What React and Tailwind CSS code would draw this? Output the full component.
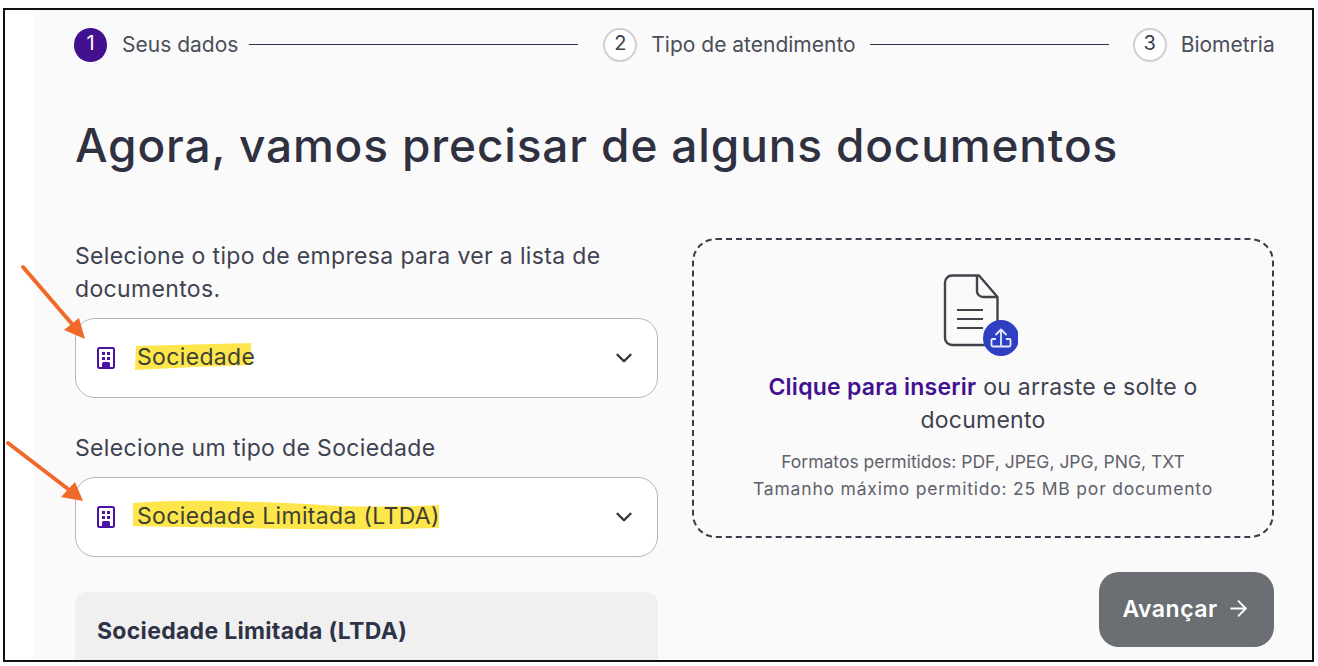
import { ChevronDown, ArrowRight } from 'lucide-react';

const font = { fontFamily: 'Inter' };

const BuildingIcon = () => (
  <svg width="18" height="22" viewBox="0 0 18 22" fill="none" className="shrink-0">
    <rect x="1" y="1" width="16" height="20" rx="1.5" stroke="#4a14a0" strokeWidth="2" />
    <rect x="5" y="5" width="3" height="3" fill="#4a14a0" />
    <rect x="10" y="5" width="3" height="3" fill="#4a14a0" />
    <rect x="5" y="10" width="3" height="3" fill="#4a14a0" />
    <rect x="10" y="10" width="3" height="3" fill="#4a14a0" />
    <path d="M5 21v-4.5a1.5 1.5 0 0 1 1.5-1.5h5a1.5 1.5 0 0 1 1.5 1.5V21z" fill="#4a14a0" />
  </svg>
);

const Step = ({ n, label, active }) => (
  <div className="flex items-center gap-[14px] shrink-0">
    {active ? (
      <div className="w-[33px] h-[34px] mr-px rounded-full bg-[#43108f] text-white flex items-center justify-center text-[20px] pb-1">{n}</div>
    ) : (
      <div className="w-[34px] h-[34px] rounded-full bg-white border-2 border-[#cfcfd6] text-[#3c3f4a] flex items-center justify-center text-[20px] pb-1">{n}</div>
    )}
    <span className="text-[21px] text-[#4b4e58]">{label}</span>
  </div>
);

const Select = ({ label, hlClass, hlPath, hlBox }) => (
  <div className="relative h-[80px] rounded-[20px] border border-[#b5b5c3] bg-white flex items-center pl-[21px] pr-[20px]">
    <BuildingIcon />
    <div className="relative ml-[22px] mb-[2px]">
      <svg width={hlBox[0]} height={hlBox[1]} viewBox={`0 0 ${hlBox[0]} ${hlBox[1]}`} className={hlClass}>
        <path d={hlPath} fill="#fde64b" />
      </svg>
      <span className="relative text-[23px] text-[#3d3f32] tracking-[0.35px]">{label}</span>
    </div>
    <ChevronDown size={26} strokeWidth={2.2} className="ml-auto text-[#30323d]" />
  </div>
);

export default function App() {
  return (
    <div className="h-[666px] w-[1318px] bg-white pt-2 pl-[3px] overflow-hidden" style={font}>
      <div className="relative flex w-[1311px] h-[654px] border-2 border-[#111] bg-white overflow-hidden">
        <div className="w-[28px] shrink-0" />
        <div className="flex-1 bg-[#fafafa] pl-[42px] pr-[37px] pt-[18px]">
          <div className="flex items-center -ml-px">
            <Step n="1" label="Seus dados" active />
            <div className="w-[329px] h-px mb-px bg-[#30334a] ml-[11px] mr-[25px]" />
            <Step n="2" label="Tipo de atendimento" />
            <div className="w-[239px] h-px mb-px bg-[#30334a] ml-[14px] mr-[24px]" />
            <Step n="3" label="Biometria" />
          </div>

          <h1 className="mt-[50px] text-[46px] leading-[66px] font-medium text-[#2f3140] tracking-[0.85px] whitespace-nowrap">
            Agora, vamos precisar de alguns documentos
          </h1>

          <div className="grid grid-cols-[583px_582px] gap-x-[34px] mt-[60px]">
            <div>
              <p className="mt-[2px] text-[23px] leading-[33px] text-[#3f4250] tracking-[0.35px] w-[570px]">
                Selecione o tipo de empresa para ver a lista de documentos.
              </p>
              <div className="mt-[12px]">
                <Select
                  label="Sociedade"
                  hlClass="absolute left-[-2px] top-[3px]"
                  hlBox={[117, 28]}
                  hlPath="M1 3 L116 0 L116 22 L60 24 L0 27z"
                />
              </div>
              <p className="mt-[34px] text-[23px] leading-[33px] text-[#3f4250] tracking-[0.35px]">
                Selecione um tipo de Sociedade
              </p>
              <div className="mt-[12px]">
                <Select
                  label="Sociedade Limitada (LTDA)"
                  hlClass="absolute left-[-4px] top-[1px]"
                  hlBox={[307, 31]}
                  hlPath="M0 3 Q40 0 90 1 T190 5 T306 5 L306 28 Q240 30 170 29 T0 26z"
                />
              </div>
              <div className="mt-[35px] h-[120px] rounded-[12px] bg-[#f0f0f0] px-[22px] pt-[23px]">
                <h2 className="text-[23px] leading-[33px] font-bold text-[#2f3347] tracking-[0.3px]">Sociedade Limitada (LTDA)</h2>
              </div>
            </div>

            <div className="flex flex-col items-end">
              <div className="w-full h-[300px] rounded-[24px] border-2 border-dashed border-[#3a3c4c] flex flex-col items-center pt-[34px]">
                <div className="relative w-[76px] h-[84px] ml-[-6px]">
                  <svg width="76" height="84" viewBox="0 0 76 84" fill="none">
                    <path d="M10 1.5h27l18.5 21.5V64a7 7 0 0 1-7 7H10a7 7 0 0 1-7-7V8.5a7 7 0 0 1 7-7z" stroke="#3f434a" strokeWidth="2.4" strokeLinejoin="round" />
                    <path d="M35 2v15a6 6 0 0 0 6 6h14" stroke="#3f434a" strokeWidth="2.4" />
                    <path d="M15 36h26M15 45h26M15 54h26" stroke="#3f434a" strokeWidth="2" />
                    <circle cx="59" cy="64" r="18" fill="#2e3fc2" />
                    <path d="M59 71V56m-5 4.5 5-5 5 5" stroke="#e6e9ff" strokeWidth="1.8" strokeLinecap="round" strokeLinejoin="round" />
                    <path d="M54 65h-3.5a1 1 0 0 0-1 1v5a1.5 1.5 0 0 0 1.5 1.5h16a1.5 1.5 0 0 0 1.5-1.5v-5a1 1 0 0 0-1-1H64" stroke="#e6e9ff" strokeWidth="1.8" />
                  </svg>
                </div>
                <p className="mt-[13px] text-[23px] leading-[33px] text-center text-[#3f4250] w-[470px] tracking-[0.25px]">
                  <span className="font-semibold text-[#43108f]">Clique para inserir</span> ou arraste e solte o documento
                </p>
                <div className="mt-[11px] text-[17.5px] leading-[27px] text-center text-[#5f626c] whitespace-nowrap">
                  <p>Formatos permitidos: PDF, JPEG, JPG, PNG, TXT</p>
                  <p className="tracking-[0.8px]">Tamanho máximo permitido: 25 MB por documento</p>
                </div>
              </div>
              <button className="mt-[34px] w-[175px] h-[75px] rounded-[20px] bg-[#6b6e72] text-white text-[23px] font-semibold tracking-[0.5px] flex items-center justify-center gap-[8px]">
                Avançar
                <ArrowRight size={25} strokeWidth={1.8} className="mb-[2px]" />
              </button>
            </div>
          </div>
        </div>

        {/* setas de anotacao */}
        <svg className="absolute left-0 top-0 pointer-events-none" width="100" height="510" viewBox="0 0 100 510" fill="none">
          <path d="M18 257 L67 314" stroke="#f0692a" strokeWidth="4" strokeLinecap="round" />
          <path d="M80 329 L59 320 L74 308z" fill="#f0692a" />
          <path d="M3 433 L63 479" stroke="#f0692a" strokeWidth="4" strokeLinecap="round" />
          <path d="M78 491 L56 487 L70 472z" fill="#f0692a" />
        </svg>
      </div>
    </div>
  );
}
